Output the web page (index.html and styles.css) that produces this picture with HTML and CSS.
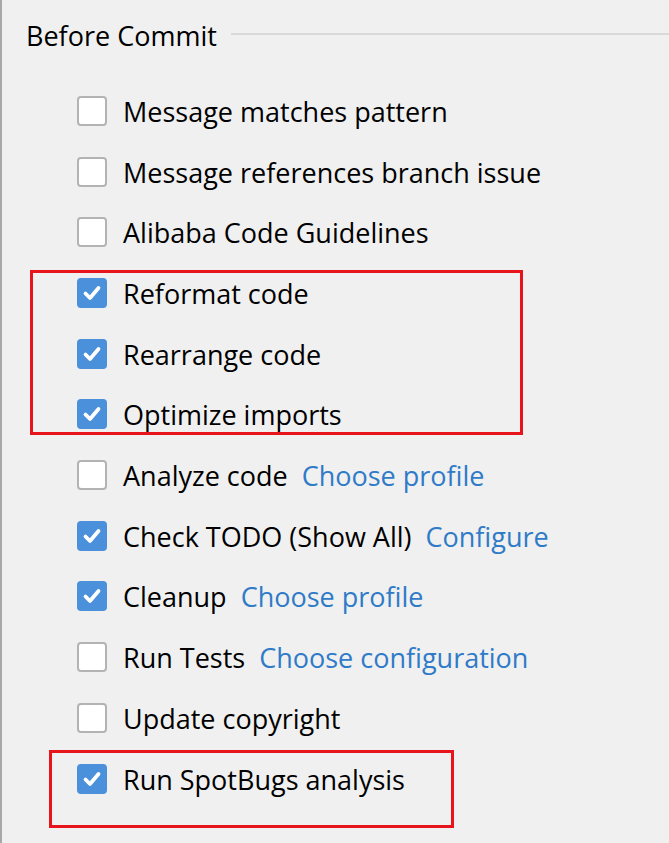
FILE: index.html
```html
<!DOCTYPE html>
<html>
<head>
<meta charset="utf-8">
<link rel="stylesheet" href="styles.css">
</head>
<body>
<div class="panel">
  <div class="header">
    <span class="title">Before Commit</span>
    <span class="rule"></span>
  </div>
  <div class="list">
    <div class="row"><span class="cb"></span><span class="label">Message matches pattern</span></div>
    <div class="row"><span class="cb"></span><span class="label">Message references branch issue</span></div>
    <div class="row"><span class="cb"></span><span class="label">Alibaba Code Guidelines</span></div>
    <div class="row"><span class="cb on"><svg viewBox="0 0 30 30"><path d="M8.5 15.5 L13 20 L21.5 10"/></svg></span><span class="label">Reformat code</span></div>
    <div class="row"><span class="cb on"><svg viewBox="0 0 30 30"><path d="M8.5 15.5 L13 20 L21.5 10"/></svg></span><span class="label">Rearrange code</span></div>
    <div class="row"><span class="cb on"><svg viewBox="0 0 30 30"><path d="M8.5 15.5 L13 20 L21.5 10"/></svg></span><span class="label">Optimize imports</span></div>
    <div class="row"><span class="cb"></span><span class="label">Analyze code</span><span class="link">Choose profile</span></div>
    <div class="row"><span class="cb on"><svg viewBox="0 0 30 30"><path d="M8.5 15.5 L13 20 L21.5 10"/></svg></span><span class="label">Check TODO (Show All)</span><span class="link">Configure</span></div>
    <div class="row"><span class="cb on"><svg viewBox="0 0 30 30"><path d="M8.5 15.5 L13 20 L21.5 10"/></svg></span><span class="label">Cleanup</span><span class="link">Choose profile</span></div>
    <div class="row"><span class="cb"></span><span class="label">Run Tests</span><span class="link">Choose configuration</span></div>
    <div class="row"><span class="cb"></span><span class="label">Update copyright</span></div>
    <div class="row"><span class="cb on"><svg viewBox="0 0 30 30"><path d="M8.5 15.5 L13 20 L21.5 10"/></svg></span><span class="label">Run SpotBugs analysis</span></div>
  </div>
  <div class="mark mark-1"></div>
  <div class="mark mark-2"></div>
</div>
</body>
</html>
```

FILE: styles.css
```css
html, body {
  margin: 0;
  padding: 0;
  background: #f0f0f0;
}

.panel {
  position: relative;
  width: 667px;
  height: 843px;
  border-left: 2px solid #a8a8a8;
  background: #f0f0f0;
  font-family: "Open Sans", "Noto Sans", sans-serif;
  color: #000;
  overflow: hidden;
}

.header {
  height: 72px;
  display: flex;
  align-items: center;
  padding-left: 24px;
}

.title {
  font-size: 27px;
  line-height: 30px;
  white-space: nowrap;
}

.rule {
  flex: 1;
  height: 2px;
  background: #d9d9d9;
  margin-left: 14px;
  margin-top: -4px;
}

.list {
  display: flex;
  flex-direction: column;
  margin-top: 8.6px;
  padding-left: 75px;
}

.row {
  height: 60.7px;
  display: flex;
  align-items: center;
  font-size: 27px;
  white-space: nowrap;
}

.cb {
  box-sizing: border-box;
  width: 30px;
  height: 30px;
  border-radius: 4px;
  border: 2px solid #b3b3b3;
  background: #fff;
  margin-right: 16px;
  flex: none;
  display: flex;
}

.cb.on {
  border: none;
  background: #4a90db;
}

.cb svg {
  width: 30px;
  height: 30px;
}

.cb svg path {
  fill: none;
  stroke: #fff;
  stroke-width: 3.8;
  stroke-linecap: round;
  stroke-linejoin: round;
}

.label {
  line-height: 30px;
  padding-top: 2px;
}

.link {
  color: #2f7bc8;
  margin-left: 14px;
  line-height: 30px;
  padding-top: 2px;
}

.mark {
  position: absolute;
  box-sizing: border-box;
  border: 3px solid #e8141c;
}

.mark-1 {
  left: 28px;
  top: 270px;
  width: 493px;
  height: 165px;
}

.mark-2 {
  left: 47px;
  top: 750px;
  width: 405px;
  height: 78px;
}
```
